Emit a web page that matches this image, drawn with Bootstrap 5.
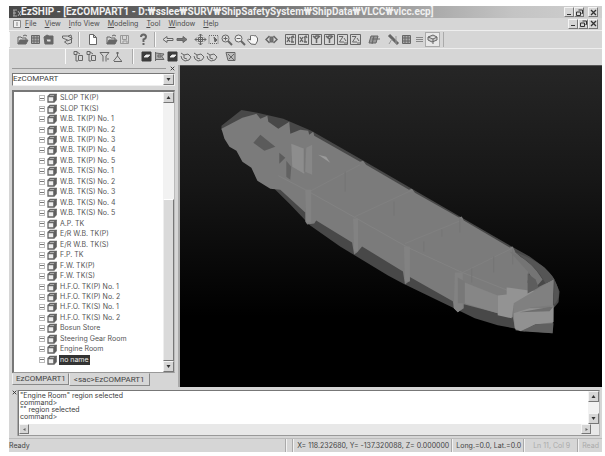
<!DOCTYPE html>
<html lang="en">
<head>
<meta charset="utf-8">
<meta name="viewport" content="width=device-width, initial-scale=1">
<title>EzSHIP</title>
<link href="https://cdn.jsdelivr.net/npm/bootstrap@5.3.0/dist/css/bootstrap.min.css" rel="stylesheet">
<style>
body{font:7px/10px Inter,"Liberation Sans",sans-serif;color:#444;background:#fff;padding:6px 3px 4px 9px;height:100vh}
button,select{font:inherit;color:inherit;padding:0;border:0;background:none;border-radius:0}
svg{display:block}
.face{background:#d6d6d6}
.titlebar{height:12px;background:linear-gradient(90deg,#484848,#777 45%,#c4c4c4 85%,#cfcfcf);color:#f0f0f0;font:bold 10px/12px Roboto,"Liberation Sans",sans-serif}
.raised{background:#d6d6d6;border:1px solid;border-color:#f4f4f4 #777 #777 #f4f4f4;display:flex;align-items:center;justify-content:center;width:10px;height:10px;flex:none}
.menurow{height:12px}
.menus{gap:8px}
.menurow a{color:#4c4c4c;text-decoration:none}
.menurow a::first-letter{text-decoration:underline}
.toolrow{height:18px;border-top:1px solid #eee}
.toolrow.second{height:17px;padding-left:56px}
.grp{padding:0 4px 0 6px;border-left:1px solid #f8f8f8;border-right:1px solid #aaa;height:15px}
.tb{width:13px;height:13px;flex:none}
.tb svg,.node svg{fill:none;stroke:#666;stroke-width:1}
.gap-l{margin-left:6px}
.on{background:#e8e8e8;box-shadow:0 0 0 1px #aaa}
.side{width:171px;flex:none;border-right:2px solid #aaa;padding:0 3px}
.grip{height:8px}
.grip hr{border-top:1px solid #999;opacity:1}
.combo{border:1px solid;border-color:#777 #eee #eee #777;background:#fff;height:13px}
.combo select{appearance:none;outline:0;font:8px/10px Roboto,sans-serif}
.sunk{border:1px solid;border-color:#777 #bbb #999 #777;background:#fff}
.treebox{border-left-width:2px;border-top-width:2px;margin-top:4px}
.tree{padding:1px 0 7px 25px}
.node{flex:1 1 0;min-height:0}
.expand{width:6px;height:6px;border:1px solid #bbb;display:flex;align-items:center;justify-content:center;margin-right:2px}
.expand::before{content:"";width:4px;height:1px;background:#777}
.node span{padding:0 1px;margin-left:2px;line-height:10px;color:#555}
.node .picked{background:#333;color:#eee}
.vbar{width:11px;background:#f2f2f2;flex:none}
.vbar .raised,.combo .raised{width:11px;height:11px}
.thumb{flex:0 0 58%;width:11px;background:#dadada;border:1px solid;border-color:#fff #777 #777 #eee}
.tabs{height:14px;font:8px/10px Roboto,sans-serif}
.tabs button{border:1px solid;border-color:transparent #888 #888 #eee;padding:0 2px 0 3px;height:12px}
.tabs .low{padding:0 4px;height:13px}
.view{background:linear-gradient(#262626,#171717 35%,#000 78%);border-top:1px solid #555}
.console{height:48px;margin-top:3px;padding:0 2px 2px 3px}
.log{line-height:7px;white-space:pre-line;color:#3c3c3c;padding:1px 0 0 1px}
.hbar{height:11px;background:#e8e8e8}
.rail{width:6px;border-right:1px solid #aaa}
.status{height:14px;border-top:1px solid #bbb;line-height:13px}
.status span{border-left:1px solid #f2f2f2;padding:0 3px;box-shadow:-1px 0 #aaa}
.status .dim{color:#aaa}
</style>
<script src="https://cdn.jsdelivr.net/npm/bootstrap@5.3.0/dist/js/bootstrap.bundle.min.js"></script>
</head>
<body class="m-0 overflow-hidden">
<svg width="0" height="0" class="position-absolute" aria-hidden="true">
<defs>
<symbol id="box" viewBox="0 0 10 10"><path d="M1 3.5h6v5.500H1zM1 3.500l2-2h6l-2 2M9 1.500v5.500l-2 2" stroke-width="1.300" fill="#eee"/><path d="M7 3.500l2-2v5.500l-2 2z" fill="#555"/></symbol>
<symbol id="open" viewBox="0 0 13 13"><path d="M2 11V4h3l1 1h4v2" /><path d="M2 11l2-4h8l-2 4z" fill="#666"/><path d="M7 3q2-2 4 0"/></symbol>
<symbol id="grid" viewBox="0 0 13 13"><path d="M2.500 2.500h8v8h-8zM5 2v9M8 2v9M2 5h9M2 8h9" fill="#aaa"/></symbol>
<symbol id="stack" viewBox="0 0 13 13"><path d="M2 4l3-2 2 1h4v8H3z" fill="#666"/><path d="M4 6h5v3H5z" fill="#ddd"/></symbol>
<symbol id="link" viewBox="0 0 13 13"><path d="M1.500 3h5l4 2v5l-4 1-3-2 3-2-5-2zM7 3l3-1 1 4-5 2"/></symbol>
<symbol id="new" viewBox="0 0 13 13"><path d="M3.500 1.500h4l3 3v7h-7zM7.500 1.500v3h3" fill="#fff"/></symbol>
<symbol id="disk" viewBox="0 0 13 13"><path d="M2.500 2.500h8v8h-8zM4.500 2.500v4h4v-4M5 10V8h4v2" stroke="#999"/></symbol>
<symbol id="help" viewBox="0 0 13 13"><path d="M4 4q0-2.500 2.500-2.500T9 4q0 1.500-2.500 2.500V9M6.500 10v2" stroke-width="2"/></symbol>
<symbol id="left" viewBox="0 0 13 13"><path d="M1 6.500l4-3v2h6v2H5v2z" fill="#ddd"/></symbol>
<symbol id="right" viewBox="0 0 13 13"><path d="M12 6.500l-4-3v2H2v2h6v2z" fill="#777"/></symbol>
<symbol id="move" viewBox="0 0 13 13"><path d="M6.500 1v11M1 6.500h11M4.500 3l2-2 2 2M4.500 10l2 2 2-2M3 4.500l-2 2 2 2M10 4.500l2 2-2 2M4.500 4.500h4v4h-4z"/></symbol>
<symbol id="zone" viewBox="0 0 13 13"><path d="M2 2.500h9v8H2z" stroke-dasharray="1 1"/><path d="M7 4l3 3-2 2z" fill="#666"/></symbol>
<symbol id="zin" viewBox="0 0 13 13"><circle cx="5.500" cy="5.500" r="3.500" fill="#ddd"/><path d="M8 8l4 4" stroke-width="2"/><path d="M3.500 5.500h4M5.500 3.500v4"/></symbol>
<symbol id="zout" viewBox="0 0 13 13"><circle cx="5.500" cy="5.500" r="3.500" fill="#eee"/><path d="M8 8l4 4" stroke-width="2"/><path d="M3.500 5.500h4"/></symbol>
<symbol id="hand" viewBox="0 0 13 13"><path d="M5 11L1.500 7l1-1 2 1V3l1-1 1 1 1-1 1 1 1-.5 1 1.500 1 1v3l-2 3.500z" fill="#f6f6f6"/></symbol>
<symbol id="rot" viewBox="0 0 13 13"><path d="M4.500 3L1 6.500 4.500 10M8.500 3L12 6.500 8.500 10" stroke-width="1.500"/><path d="M5 4h3v5H5z" fill="#777"/></symbol>
<symbol id="ax" viewBox="0 0 13 13"><path d="M1.500 1.500h10v10h-10z"/><path d="M3 4l3 5M6 4L3 9M8 3v6M7 5l2-2 1 2M7 9h3" stroke-width="1.300"/></symbol>
<symbol id="ay" viewBox="0 0 13 13"><path d="M1.500 1.500h10v10h-10z"/><path d="M3 3l3.500 3L10 3M6.500 6v4M4 5l2-2h3" stroke-width="1.500"/></symbol>
<symbol id="az" viewBox="0 0 13 13"><path d="M1.500 1.500h10v10h-10z"/><path d="M3 3.500h4L3.500 9H8M8 5l2 3M8 10h3"/></symbol>
<symbol id="iso" viewBox="0 0 13 13"><path d="M3 3h7l-2 7H1zM4 6h8M6 3L4 11" fill="#999"/></symbol>
<symbol id="axis" viewBox="0 0 13 13"><path d="M2 2l3 3M5 5l3 3M8 8l3 3" stroke-width="3"/><path d="M9 3v8M2 11l3-5" stroke="#999"/></symbol>
<symbol id="dots" viewBox="0 0 13 13"><path d="M3 4.500h7M3 6.500h7M3 8.500h7" stroke="#888"/></symbol>
<symbol id="cube" viewBox="0 0 13 13"><path d="M2 4l5-2 4 2-4 2zM2 4v3l4 2 5-2V4M7 6v5" fill="#ccc"/></symbol>
<symbol id="tree1" viewBox="0 0 13 13"><path d="M2 1.500h3v3H2zM4 5v6h2M6.500 5.500h4v5h-4zM5 2l3 2" /></symbol>
<symbol id="funnel" viewBox="0 0 13 13"><path d="M2 2.500h9L8 6v5.500M5 11.500V6L2 2.500M9 9h2"/></symbol>
<symbol id="peak" viewBox="0 0 13 13"><path d="M6.500 2v4l-4 5M6.500 6l4 5M3 11.500h8M5 3h3"/></symbol>
<symbol id="solid" viewBox="0 0 13 13"><path d="M2 2h9v9H2z" fill="#3c3c3c" stroke="#3c3c3c"/><path d="M4 7l2-2h4L8 7z" fill="#fff" stroke="#ddd"/></symbol>
<symbol id="flag" viewBox="0 0 13 13"><path d="M2.500 2v9M3 3l8 1-2 2.500 2 3H3M5 5h3v2H5z" fill="#aaa"/></symbol>
<symbol id="loop" viewBox="0 0 13 13"><path d="M2 3l3 2 4-1 3 3-2 3-4 1-3-2-1-3M5 5v3l3 1"/></symbol>
<symbol id="pen" viewBox="0 0 13 13"><path d="M2 2.500h9v8H4zM4 4l6 6M5 9l5-5" fill="#bbb"/></symbol>
<symbol id="up" viewBox="0 0 7 7"><path d="M3.500 2L1.500 5h4z" fill="#333"/></symbol>
<symbol id="down" viewBox="0 0 7 7"><path d="M3.500 5L1.500 2h4z" fill="#333"/></symbol>
<symbol id="lt" viewBox="0 0 7 7"><path d="M2 3.500L4.500 2v3z" fill="#666"/></symbol>
<symbol id="rt" viewBox="0 0 7 7"><path d="M5 3.500L2.500 2v3z" fill="#666"/></symbol>
<symbol id="min" viewBox="0 0 7 7"><path d="M1 5h4v1H1z" fill="#333"/></symbol>
<symbol id="max" viewBox="0 0 7 7"><path d="M2.500 1h4v3.500h-1M.5 3h4v3.500h-4z" fill="none" stroke="#333"/></symbol>
<symbol id="x" viewBox="0 0 7 7"><path d="M1 1l5 5M6 1L1 6" stroke="#333" stroke-width="1.300"/></symbol>
</defs>
</svg>
<div class="face d-flex flex-column h-100">
  <header class="titlebar d-flex align-items-center px-1 text-nowrap">
    <svg width="8" height="9" viewBox="0 0 8 9" class="flex-shrink-0"><path d="M0 2h4M0 5h3M0 8h4M1 2v6M5 3l3 5M8 3L5 8" stroke="#aaa" fill="none"/></svg>
    <span class="flex-grow-1 overflow-hidden">EzSHIP - [EzCOMPART1 - D:₩sslee₩SURV₩ShipSafetySystem₩ShipData₩VLCC₩vlcc.ecp]</span>
    <button class="raised" aria-label="Minimize"><svg width="7" height="7"><use href="#min"/></svg></button>
    <button class="raised" aria-label="Restore"><svg width="7" height="7"><use href="#max"/></svg></button>
    <button class="raised ms-1" aria-label="Close"><svg width="7" height="7"><use href="#x"/></svg></button>
  </header>
  <nav class="menurow d-flex align-items-center px-1">
    <svg width="8" height="8" viewBox="0 0 8 8" class="me-1"><path d="M.5.500h7v7h-7zM4 2v4" fill="#eee" stroke="#888"/></svg>
    <div class="d-flex flex-grow-1 menus"><a href="#" class="d-block">File</a><a href="#" class="d-block">View</a><a href="#" class="d-block">Info View</a><a href="#" class="d-block">Modeling</a><a href="#" class="d-block">Tool</a><a href="#" class="d-block">Window</a><a href="#" class="d-block">Help</a></div>
    <button class="raised" aria-label="Minimize document"><svg width="7" height="7"><use href="#min"/></svg></button>
    <button class="raised" aria-label="Restore document"><svg width="7" height="7"><use href="#max"/></svg></button>
    <button class="raised" aria-label="Close document"><svg width="7" height="7"><use href="#x"/></svg></button>
  </nav>
  <div class="toolrow d-flex align-items-center">
    <div class="grp d-flex align-items-center">
      <button class="tb" aria-label="Open project"><svg width="13" height="13"><use href="#open"/></svg></button><button class="tb" aria-label="Table"><svg width="13" height="13"><use href="#grid"/></svg></button><button class="tb" aria-label="Import"><svg width="13" height="13"><use href="#stack"/></svg></button><button class="tb gap-l" aria-label="Link"><svg width="13" height="13"><use href="#link"/></svg></button>
    </div>
    <div class="grp d-flex align-items-center">
      <button class="tb" aria-label="New"><svg width="13" height="13"><use href="#new"/></svg></button><button class="tb gap-l" aria-label="Open"><svg width="13" height="13"><use href="#open"/></svg></button><button class="tb" aria-label="Save"><svg width="13" height="13"><use href="#disk"/></svg></button><button class="tb gap-l" aria-label="Help"><svg width="13" height="13"><use href="#help"/></svg></button>
    </div>
    <div class="grp d-flex align-items-center">
      <button class="tb" aria-label="Back"><svg width="13" height="13"><use href="#left"/></svg></button><button class="tb" aria-label="Forward"><svg width="13" height="13"><use href="#right"/></svg></button><button class="tb gap-l" aria-label="Fit"><svg width="13" height="13"><use href="#move"/></svg></button><button class="tb" aria-label="Zoom window"><svg width="13" height="13"><use href="#zone"/></svg></button><button class="tb" aria-label="Zoom in"><svg width="13" height="13"><use href="#zin"/></svg></button><button class="tb" aria-label="Zoom out"><svg width="13" height="13"><use href="#zout"/></svg></button><button class="tb" aria-label="Pan"><svg width="13" height="13"><use href="#hand"/></svg></button><button class="tb gap-l" aria-label="Rotate"><svg width="13" height="13"><use href="#rot"/></svg></button><button class="tb gap-l" aria-label="X view"><svg width="13" height="13"><use href="#ax"/></svg></button><button class="tb" aria-label="Minus X view"><svg width="13" height="13"><use href="#ax"/></svg></button><button class="tb" aria-label="Y view"><svg width="13" height="13"><use href="#ay"/></svg></button><button class="tb" aria-label="Minus Y view"><svg width="13" height="13"><use href="#ay"/></svg></button><button class="tb" aria-label="Z view"><svg width="13" height="13"><use href="#az"/></svg></button><button class="tb" aria-label="Minus Z view"><svg width="13" height="13"><use href="#az"/></svg></button><button class="tb gap-l" aria-label="Isometric"><svg width="13" height="13"><use href="#iso"/></svg></button><button class="tb gap-l" aria-label="Axis"><svg width="13" height="13"><use href="#axis"/></svg></button><button class="tb" aria-label="Grid"><svg width="13" height="13"><use href="#grid"/></svg></button><button class="tb" aria-label="Snap"><svg width="13" height="13"><use href="#dots"/></svg></button><button class="tb on" aria-label="Shaded"><svg width="13" height="13"><use href="#cube"/></svg></button>
    </div>
  </div>
  <div class="toolrow second d-flex align-items-center">
    <div class="grp d-flex align-items-center pe-2">
      <button class="tb" aria-label="Add node"><svg width="13" height="13"><use href="#tree1"/></svg></button><button class="tb" aria-label="Copy node"><svg width="13" height="13"><use href="#tree1"/></svg></button><button class="tb" aria-label="Filter"><svg width="13" height="13"><use href="#funnel"/></svg></button><button class="tb" aria-label="Section"><svg width="13" height="13"><use href="#peak"/></svg></button>
    </div>
    <div class="grp d-flex align-items-center border-end-0">
      <button class="tb" aria-label="Solid"><svg width="13" height="13"><use href="#solid"/></svg></button><button class="tb" aria-label="Surface"><svg width="13" height="13"><use href="#flag"/></svg></button><button class="tb" aria-label="Region"><svg width="13" height="13"><use href="#solid"/></svg></button><button class="tb" aria-label="Curve"><svg width="13" height="13"><use href="#loop"/></svg></button><button class="tb" aria-label="Edit curve"><svg width="13" height="13"><use href="#loop"/></svg></button><button class="tb" aria-label="Close curve"><svg width="13" height="13"><use href="#loop"/></svg></button><button class="tb gap-l" aria-label="Edit"><svg width="13" height="13"><use href="#pen"/></svg></button>
    </div>
  </div>
  <main class="d-flex flex-grow-1 overflow-hidden">
    <aside class="side d-flex flex-column">
      <div class="grip d-flex align-items-center"><hr class="flex-grow-1 m-0 me-1"><button aria-label="Close panel"><svg width="5" height="5"><use href="#x"/></svg></button></div>
      <div class="combo d-flex flex-shrink-0"><select class="flex-grow-1" aria-label="Module"><option>EzCOMPART</option></select><span class="raised"><svg width="7" height="7"><use href="#down"/></svg></span></div>
      <div class="sunk treebox d-flex flex-grow-1 overflow-hidden">
        <ul class="tree list-unstyled m-0 flex-grow-1 d-flex flex-column text-nowrap">
          <li class="node d-flex align-items-center"><button class="expand" aria-label="Expand"></button><svg width="10" height="10"><use href="#box"/></svg><span>SLOP TK(P)</span></li>
          <li class="node d-flex align-items-center"><button class="expand" aria-label="Expand"></button><svg width="10" height="10"><use href="#box"/></svg><span>SLOP TK(S)</span></li>
          <li class="node d-flex align-items-center"><button class="expand" aria-label="Expand"></button><svg width="10" height="10"><use href="#box"/></svg><span>W.B. TK(P) No. 1</span></li>
          <li class="node d-flex align-items-center"><button class="expand" aria-label="Expand"></button><svg width="10" height="10"><use href="#box"/></svg><span>W.B. TK(P) No. 2</span></li>
          <li class="node d-flex align-items-center"><button class="expand" aria-label="Expand"></button><svg width="10" height="10"><use href="#box"/></svg><span>W.B. TK(P) No. 3</span></li>
          <li class="node d-flex align-items-center"><button class="expand" aria-label="Expand"></button><svg width="10" height="10"><use href="#box"/></svg><span>W.B. TK(P) No. 4</span></li>
          <li class="node d-flex align-items-center"><button class="expand" aria-label="Expand"></button><svg width="10" height="10"><use href="#box"/></svg><span>W.B. TK(P) No. 5</span></li>
          <li class="node d-flex align-items-center"><button class="expand" aria-label="Expand"></button><svg width="10" height="10"><use href="#box"/></svg><span>W.B. TK(S) No. 1</span></li>
          <li class="node d-flex align-items-center"><button class="expand" aria-label="Expand"></button><svg width="10" height="10"><use href="#box"/></svg><span>W.B. TK(S) No. 2</span></li>
          <li class="node d-flex align-items-center"><button class="expand" aria-label="Expand"></button><svg width="10" height="10"><use href="#box"/></svg><span>W.B. TK(S) No. 3</span></li>
          <li class="node d-flex align-items-center"><button class="expand" aria-label="Expand"></button><svg width="10" height="10"><use href="#box"/></svg><span>W.B. TK(S) No. 4</span></li>
          <li class="node d-flex align-items-center"><button class="expand" aria-label="Expand"></button><svg width="10" height="10"><use href="#box"/></svg><span>W.B. TK(S) No. 5</span></li>
          <li class="node d-flex align-items-center"><button class="expand" aria-label="Expand"></button><svg width="10" height="10"><use href="#box"/></svg><span>A.P. TK</span></li>
          <li class="node d-flex align-items-center"><button class="expand" aria-label="Expand"></button><svg width="10" height="10"><use href="#box"/></svg><span>E/R W.B. TK(P)</span></li>
          <li class="node d-flex align-items-center"><button class="expand" aria-label="Expand"></button><svg width="10" height="10"><use href="#box"/></svg><span>E/R W.B. TK(S)</span></li>
          <li class="node d-flex align-items-center"><button class="expand" aria-label="Expand"></button><svg width="10" height="10"><use href="#box"/></svg><span>F.P. TK</span></li>
          <li class="node d-flex align-items-center"><button class="expand" aria-label="Expand"></button><svg width="10" height="10"><use href="#box"/></svg><span>F.W. TK(P)</span></li>
          <li class="node d-flex align-items-center"><button class="expand" aria-label="Expand"></button><svg width="10" height="10"><use href="#box"/></svg><span>F.W. TK(S)</span></li>
          <li class="node d-flex align-items-center"><button class="expand" aria-label="Expand"></button><svg width="10" height="10"><use href="#box"/></svg><span>H.F.O. TK(P) No. 1</span></li>
          <li class="node d-flex align-items-center"><button class="expand" aria-label="Expand"></button><svg width="10" height="10"><use href="#box"/></svg><span>H.F.O. TK(P) No. 2</span></li>
          <li class="node d-flex align-items-center"><button class="expand" aria-label="Expand"></button><svg width="10" height="10"><use href="#box"/></svg><span>H.F.O. TK(S) No. 1</span></li>
          <li class="node d-flex align-items-center"><button class="expand" aria-label="Expand"></button><svg width="10" height="10"><use href="#box"/></svg><span>H.F.O. TK(S) No. 2</span></li>
          <li class="node d-flex align-items-center"><button class="expand" aria-label="Expand"></button><svg width="10" height="10"><use href="#box"/></svg><span>Bosun Store</span></li>
          <li class="node d-flex align-items-center"><button class="expand" aria-label="Expand"></button><svg width="10" height="10"><use href="#box"/></svg><span>Steering Gear Room</span></li>
          <li class="node d-flex align-items-center"><button class="expand" aria-label="Expand"></button><svg width="10" height="10"><use href="#box"/></svg><span>Engine Room</span></li>
          <li class="node d-flex align-items-center"><button class="expand" aria-label="Expand"></button><svg width="10" height="10"><use href="#box"/></svg><span class="picked">no name</span></li>
        </ul>
        <div class="vbar d-flex flex-column">
          <button class="raised" aria-label="Scroll up"><svg width="7" height="7"><use href="#up"/></svg></button>
          <div class="flex-grow-1"></div>
          <div class="thumb"></div>
          <button class="raised" aria-label="Scroll down"><svg width="7" height="7"><use href="#down"/></svg></button>
        </div>
      </div>
      <div class="tabs d-flex flex-shrink-0"><button>EzCOMPART1</button><button class="low">&lt;sac&gt;EzCOMPART1</button></div>
    </aside>
    <section class="view flex-grow-1">
      <svg class="w-100 h-100" viewBox="180 66 422 322" role="img" aria-label="Ship hull compartments">
        <path d="M221 126L241 110 257 113 283 119 311 131 360 159 405 185 512 247 530 257 545 268 555 280 560 292 559 303 554 309 553 334 530 332 498 326 475 319 403 284 388 276 340 247 310 226 290 205 272 187 221 130z" fill="#484848"/>
        <path d="M221 129L242 118 256 114 260 119 267 116 268 122 278 129 289 122 290 134 300 130 308 131 309 135 313 132 314 136 360 162 363 161 366 165 409 190 412 189 415 193 459 218 462 217 464 221 510 248 513 247 516 253 530 266 528 283 534 290 554 280 553 325 535 325 525 332 516 331 513 318 464 305 464 309 458 313 454 309 453 302 409 277 409 282 405 285 403 272 362 247 357 253 354 255 352 243 316 221 314 224 307 225 305 222 305 213 280 190 270 189 257 181 251 168 242 162 236 151 229 147 224 139z" fill="#7b7b7b"/>
        <path d="M260 135L275 147 264 151 253 143z" fill="#5b5b5b"/>
        <path d="M279 153L285 158 279 164z" fill="#5c5c5c"/><path d="M286 161l5 6-1 13-4-3z" fill="#626262"/>
        <path d="M291 144L304 149V174L292 167z" fill="#8d8d8d"/><path d="M306 148L312 145V175L305 172z" fill="#878787"/><path d="M304 149v23" stroke="#757575"/>
        <path d="M318 155l8 2 4 6-6-4z" fill="#9a9a9a"/>
        <path d="M278 176L305 190 355 218 408 248 460 272 508 291" fill="none" stroke="#838383"/>
        <path d="M309 192L360 165M355 217L411 191M405 244L461 221M455 277L512 249" fill="none" stroke="#818181"/>
        <path d="M345 172v20M394 202v14M424 242v10M442 230v7M460 218v15M472 269v14M494 257v16M513 249v16" stroke="#747474"/>
        <path d="M305 190h6v33h-5zM353 219h5v33h-4zM404 247h6v35h-5zM455 273h8v36l-5 4-4-4z" fill="#828282"/>
        <path d="M458 278l7 4v22h-7z" fill="#787878"/>
        <path d="M465 283L498 296V314L465 304z" fill="#868686"/><path d="M507 288L536 292 514 306 512 319 498 316V296L507 295z" fill="#939393"/>
        <path d="M510 252Q531 260 543 280L537 287 529 273z" fill="#747474"/>
        <path d="M514 252Q545 263 555 280L546 284Q537 266 514 252z" fill="#555"/>
        <path d="M528 274L536 280 539 288 528 294z" fill="#5d5d5d"/>
        <path d="M514 304L554 280 553 306 531 308 514 318z" fill="#808080"/>
        <path d="M514 314L530 309 548 309 554 306V323L536 325 521 332 515 329z" fill="#919191"/><path d="M520 313L554 307 550 312z" fill="#6e6e6e"/>
        <path d="M521 332L536 325 554 324 553 334z" fill="#606060"/>
        <path d="M555 281Q564 296 554 306z" fill="#555"/>
      </svg>
    </section>
  </main>
  <section class="console d-flex flex-shrink-0">
    <div class="rail"><button class="d-block" aria-label="Close console"><svg width="5" height="5"><use href="#x"/></svg></button></div>
    <div class="sunk flex-grow-1 d-flex flex-column">
      <div class="d-flex flex-grow-1">
        <div class="log flex-grow-1">"Engine Room" region selected
command&gt;
"" region selected
command&gt;</div>
        <div class="vbar d-flex flex-column justify-content-between"><button class="raised" aria-label="Console up"><svg width="7" height="7"><use href="#up"/></svg></button><button class="raised" aria-label="Console down"><svg width="7" height="7"><use href="#down"/></svg></button></div>
      </div>
      <div class="hbar d-flex justify-content-between"><button class="raised" aria-label="Console left"><svg width="7" height="7"><use href="#lt"/></svg></button><button class="raised me-2" aria-label="Console right"><svg width="7" height="7"><use href="#rt"/></svg></button></div>
    </div>
  </section>
  <footer class="status d-flex flex-shrink-0 text-nowrap">
    <div class="flex-grow-1">Ready</div>
    <span></span><span>X= 118.232680, Y= -137.320088, Z= 0.000000</span><span>Long.=0.0, Lat.=0.0</span><span class="dim px-2">Ln 11, Col 9</span><span class="dim">Read</span>
  </footer>
</div>
</body>
</html>
